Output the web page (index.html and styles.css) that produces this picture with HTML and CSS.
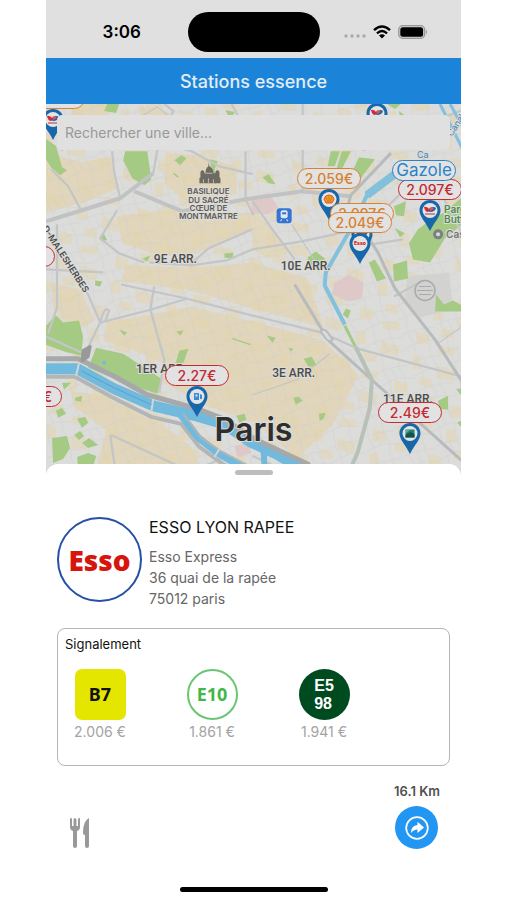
FILE: index.html
```
<!DOCTYPE html>
<html lang="fr">

<head>
  <meta charset="UTF-8">
  <meta name="viewport" content="width=device-width, initial-scale=1.0">
  <title>Stations essence</title>
  <link rel="stylesheet" href="styles.css">
</head>

<body>
  <!-- Shared symbols -->
  <svg class="symbols" aria-hidden="true">
    <symbol id="pin" viewBox="0 0 22 31">
      <path d="M11 0C4.900 0 .5 4.500.5 10.500C.5 17 6.500 21.500 11 31C15.500 21.500 21.500 17 21.500 10.500C21.500 4.500 17.100 0 11 0Z" fill="#1767ab"/>
      <circle cx="11" cy="10.500" r="7.500" fill="#e4e4e4"/>
    </symbol>
    <symbol id="total" viewBox="0 0 22 31">
      <use href="#pin"/>
      <path d="M5 7q3-1 6 3l-2 2q-3 0-4-5z" fill="#d32a36"/>
      <path d="M9 11q4-6 8-3q-1 4-6 4z" fill="#2d5fa8"/>
      <path d="M10 8q3-2 5 1l-4 2z" fill="#d65a48"/>
      <path d="M6 14h10" stroke="#c96d70" stroke-width="1.500"/>
    </symbol>
  </svg>

  <div class="phone">
    <div class="status-bar">
      <span class="time">3:06</span>
      <span class="island"></span>
      <span class="status-icons">
        <svg width="22" height="18" viewBox="0 0 22 18" fill="#a9a9a9">
          <circle cx="2" cy="13" r="1.700"/><circle cx="8" cy="13" r="1.700"/><circle cx="14" cy="13" r="1.700"/><circle cx="20" cy="13" r="1.700"/>
        </svg>
        <svg width="18" height="14" viewBox="0 0 18 14" fill="none" stroke="#000" stroke-width="2.400">
          <path d="M1 5.200Q9-2.200 17 5.200M4 8.300Q9 3.700 14 8.300"/>
          <path d="M9 13.500L6 10.500Q9 8 12 10.500Z" fill="#000" stroke="none"/>
        </svg>
        <svg width="30" height="14" viewBox="0 0 30 14">
          <rect x=".7" y=".7" width="26" height="12.600" rx="4" fill="#d0d0d0" stroke="#999" stroke-width="1.300"/>
          <rect x="2.300" y="2.200" width="22.800" height="9.600" rx="2.500"/>
          <path d="M28 4.500q2 2.500 0 5z" fill="#999"/>
        </svg>
      </span>
    </div>

    <header class="navbar">
      <h1>Stations essence</h1>
    </header>

    <main class="map">
      <svg class="map-tiles" viewBox="0 0 415 371" preserveAspectRatio="xMinYMin slice">
        <defs>
          <pattern id="streets" width="34" height="29" patternUnits="userSpaceOnUse" patternTransform="rotate(-17)">
            <path d="M0 5L13 4L34 7M0 19L18 16L34 21M8 0L6 5L9 18L7 29M24 0L22 6L25 18L22 29M14 4L16 17" fill="none" stroke="#cbccca" stroke-width=".8"/>
          </pattern>
          <pattern id="blocks" width="61" height="53" patternUnits="userSpaceOnUse" patternTransform="rotate(24)">
            <path d="M3 4l13-2 3 9-12 5zM28 8l17-5 2 7-15 6zM9 28l8-4 6 12-9 4zM35 27l19-3 2 10-16 4zM24 44l12-3 4 7-13 4z" fill="#e3d5ae"/>
          </pattern>
        </defs>
        <rect width="415" height="371" fill="#dcdcda"/>

        <!-- built-up areas -->
        <g fill="#e2d6b6" opacity=".85">
          <path d="M0 48L35 58L65 52L72 84L38 98L0 108Z"/>
          <path d="M24 0H72L60 12H26ZM91 2L124 8L118 18H96Z"/>
          <path d="M70 112L125 105L160 117L206 107L204 126L150 149L113 151L76 139Z"/>
          <path d="M80 160L145 163L206 158L260 173L277 223L206 204L140 185L75 177Z"/>
          <path d="M60 218L104 210L145 202L206 217L275 235L312 270L286 320L250 354L211 319L160 301L119 279L116 258L84 244L58 236Z"/>
          <path d="M4 178L34 185L48 216L38 223L8 206Z"/>
          <path d="M25 286L57 291L120 323L145 342L158 371H48L60 325L28 302Z"/>
          <path d="M119 48L154 52L190 62V90L142 98L118 80Z"/>
          <path d="M206 104L230 130L245 148L222 154L206 145Z"/>
        </g>
        <rect width="415" height="371" fill="url(#blocks)" opacity=".55"/>
        <rect width="415" height="371" fill="url(#streets)" opacity=".5"/>

        <!-- pink and grey zones -->
        <path d="M204 94L222 89L232 103L222 110L206 109ZM302 170L317 178L315 194L302 197L285 190L287 179ZM188 341l14-3 3 10-14 4z" fill="#dfc9c8"/>
        <path d="M360 172L402 168L406 205L372 213L358 195Z" fill="#d2d2d1"/>

        <!-- parks -->
        <g fill="#a5ca84">
          <path d="M79 47H101L105 75L98 81L86 74L77 56Z"/>
          <path d="M0 35L10 42L16 63L21 66L14 71L5 63L0 55Z"/>
          <path d="M61 0L73 0L70 9L58 7ZM128 56l7-5 5 3-6 7zM163 55l8 2-3 9 5 8-4 6zM54 133l4-3 3 6-6 1zM96 154l8-3-3 6zM178 149l9-1-1 6-8-1zM49 176l7 1-2 5-5-1zM179 6l9 2-4 9z"/>
          <path d="M0 221L10 211L17 218L33 216L37 232L35 251L19 247L0 240Z"/>
          <path d="M50 243L77 249L115 274L111 289L83 280L42 263Z"/>
          <path d="M133 246l9-2-5 14-8 1zM73 225l8 3-3 3zM130 227l7-1-3 5zM16 278h9l-7 7zM10 306l6-3 4 6-8 4zM29 293l7-2-1 6-6-1zM31 314l8-2 3 6-6 5zM28 330l6-4 4 5-5 4zM36 338l7-5 9 7-10 3zM31 352l11-4 8 3-3 11H32ZM6 333l15-2 3 12-7 11-10 4z"/>
          <path d="M340 0h14l-6 5zM352 7l8 6-6 6zM284 47h9l-5 15-7 0zM295 47h9l-9 18-5-1zM312 53l16 2-14 19-10-3zM356 22l9 2-5 8zM347 102l12-5-2 15-8-1zM216 73l6-3 7 10-7-1zM348 124l10 5-5 4zM261 153l8-6 9 7-5 13-12-5zM322 158l6-3 11 19-9 3zM346 160l14-4 1 18-14 3z"/>
          <path d="M378 120L397 108L415 93V120L398 134L383 158L366 155L362 139L371 125Z"/>
          <path d="M389 190L397 200L406 196L415 201V207L388 207ZM299 204l5 2-3 8-5-4zM257 254l8-2 5 9-8 1zM220 231l9 2-3 5zM242 243l5 1-3 3zM247 293l5-1 4 4-7 4zM272 309l7-1-2 6-4 2zM391 296l10-5v14l-9-1zM409 284h6v8zM410 318l5-3v8zM190 311l8-2 2 6-7 3zM352 325l6 3-5 3z"/>
        </g>
        <g fill="none" stroke="#a5ca84" stroke-width="3">
          <path d="M298 221L309 243L318 260"/>
          <path d="M127 69l5 4M186 234l18 6" stroke-width="1.500"/>
        </g>

        <!-- secondary roads -->
        <g fill="none" stroke="#c3c5c6" stroke-width="2.200">
          <path d="M66 47L68 68L74 94M5 65L22 82L35 106M71 106L54 134L73 149L98 158M103 158L145 161L180 156L206 145L255 137L315 124M144 160L162 144L206 125M118 0L127 7L111 46L107 69M119 40L145 47L172 62L206 70M185 0L195 18M199 47V95L207 111M11 120V203L2 229M0 165L57 168"/>
          <path d="M75 180L140 194L206 211L275 228L311 244L415 272M108 182L104 205L118 255L113 288M54 218L105 205L141 194M54 218Q58 201 63 206L59 217M38 251L54 218L42 190L24 167M0 232L36 248M64 330L70 371M65 330L145 367L176 353M256 0V88M206 97L228 128L248 155M316 46L345 35L415 6M312 142L356 135M347 192L376 176M372 46L415 130M332 111L361 82M206 351L250 371"/>
          <path d="M85 18L111 3L129 17L162 25M15 47L40 30M245 120L272 162M206 290L250 275L283 249M389 240L415 222" stroke-width="1.200"/>
        </g>

        <!-- main roads -->
        <g fill="none" stroke="#b8bbbd" stroke-width="4" stroke-linejoin="round">
          <path d="M0 117L36 106L74 94L107 69M88 87L136 107L199 95L256 87L303 92" stroke="#c0c2c3"/>
          <path d="M344 49L304 91L301 102L331 148L348 184L388 235L415 277V285M248 180L274 223L283 237L326 276L415 356" stroke-width="3"/>
          <path d="M274 227q3-4 7 1l5 7q-3 3-7-1z" fill="#dcdcda" stroke-width="2"/>
        </g>
        <path d="M309 243L325 275L323 303L311 347L304 363" fill="none" stroke="#b7c1b8" stroke-width="4"/>

        <!-- Seine and canals -->
        <g fill="none" stroke-linejoin="round">
          <path d="M0 272H29L65 292L105 312L135 319L153 342L172 356L195 371" stroke="#b4b6b6" stroke-width="4"/>
          <path d="M0 264H31L68 284L107 301L150 311L178 319L204 337L230 349L268 371" stroke="#72b9de" stroke-width="11"/>
          <path d="M133 308L151 332L171 348L202 366" stroke="#72b9de" stroke-width="7"/>
          <path d="M217 345L218 363" stroke="#72b9de" stroke-width="6"/>
          <path d="M137 309L155 333L174 346L202 361" stroke="#b1b4b5" stroke-width="2"/>
          <path d="M0 254H32L67 271L101 290L151 304L177 314L208 334L263 360" stroke="#a6a8a9" stroke-width="5"/>
          <path d="M37 246L44 242L42 252L36 256Z" fill="#999" stroke="#999" stroke-width="3"/>
          <path d="M352 67L321 89L306 121L279 168L278 181L298 220" stroke="#82c0dc" stroke-width="4"/>
          <path d="M349 69L320 91" stroke="#82c0dc" stroke-width="8"/>
          <path d="M393 0L415 44M403 0L415 22" stroke="#82c0dc" stroke-width="3"/>
          <path d="M33 258L30 271M107 294L105 307M173 344L168 352" stroke="#d3d5d4" stroke-width="2"/>
          <path d="M35 266L68 283L105 300" stroke="#5ba5d0" stroke-width="1"/>
        </g>
        <circle cx="58" cy="258" r="2" fill="#79b9d8"/>

        <!-- Sacré-Cœur -->
        <g fill="#6d6a63">
          <path d="M162 58l1 4q4 2 4 7h2q0-3 2-3t2 3v4l1 1v5h-21v-5l1-1v-4q0-3 2-3t2 3h1q0-5 3-7z"/>
          <path d="M157 75v4M162 74v5M167 75v4M159 69h7" stroke="#b9b6ae" stroke-width="1"/>
        </g>
        <!-- train station -->
        <rect x="230" y="104" width="15" height="15" rx="3" fill="#3474d4"/>
        <rect x="234" y="106" width="7" height="8" rx="2" fill="#e2e6ee"/>
        <path d="M235.500 108h4v2h-4z" fill="#3474d4"/>
        <path d="M235 115l-1 2M240 115l1 2" stroke="#e2e6ee"/>
        <!-- other points of interest -->
        <circle cx="391" cy="130" r="5" fill="#7c8083"/><circle cx="391" cy="130" r="2" fill="#d9d9d9"/>
        <g fill="none" stroke="#aaa"><circle cx="378" cy="186" r="10" stroke-width="1.500"/><path d="M372 182h12M370 186h16M372 190h12"/></g>

        <g class="map-labels">
          <g class="landmark">
            <text x="162" y="90">BASILIQUE</text>
            <text x="162" y="99">DU SACRÉ</text>
            <text x="162" y="107">CŒUR DE</text>
            <text x="162" y="115">MONTMARTRE</text>
          </g>
          <g class="district">
            <text x="129" y="159">9E ARR.</text>
            <text x="259" y="166">10E ARR.</text>
            <text x="115" y="268">1ER ARR.</text>
            <text x="247" y="272">3E ARR.</text>
            <text x="361" y="298">11E ARR.</text>
          </g>
          <text class="street" transform="translate(-4 124) rotate(57)">D-MALESHERBES</text>
          <g class="place">
            <text x="397" y="109">Parc</text>
            <text x="397" y="119">Buttes</text>
            <text class="poi" x="399" y="134">Casino</text>
          </g>
          <text class="canal" transform="translate(405 33) rotate(-58)">Canal</text>
          <text class="canal" x="370" y="54">Ca</text>
          <text class="city" x="207" y="336">Paris</text>
        </g>
      </svg>

      <button type="button" class="marker orange m1"><span>1.999€</span><svg><use href="#total"/></svg></button>
      <button type="button" class="marker red m2"><span></span><svg><use href="#total"/></svg></button>
      <button type="button" class="marker red m3"><span></span></button>
      <button type="button" class="marker red m4"><span>2.199€</span></button>
      <button type="button" class="marker orange m5"><span>2.059€</span>
        <svg viewBox="0 0 22 31"><use href="#pin"/><path d="M8 14L6 10Q7 6 11 6T16 10L14 14Z" fill="#e8a51c" stroke="#d9532a"/><path d="M11 13V7M10 13L8 8M12 13l2-5" stroke="#d9532a" stroke-width=".6"/></svg>
      </button>
      <button type="button" class="marker orange m6"><span>2.097€</span><svg><use href="#total"/></svg></button>
      <button type="button" class="marker orange m7"><span>2.049€</span>
        <svg viewBox="0 0 22 31"><use href="#pin"/><text x="11" y="12" class="pin-text">Esso</text></svg>
      </button>
      <button type="button" class="marker red m8"><span>2.097€</span><svg><use href="#total"/></svg></button>
      <button type="button" class="marker red m9"><span>2.27€</span>
        <svg viewBox="0 0 22 31"><use href="#pin"/><path d="M8 7h5v7H8zM14 8l2 1v4h-2" fill="#3b8cd2"/><path d="M9.500 8.500h2v2h-2z" fill="#e4e4e4"/></svg>
      </button>
      <button type="button" class="marker red m10"><span>2.49€</span>
        <svg viewBox="0 0 22 31"><use href="#pin"/><path d="M6.500 6.500h9v8h-9z" fill="#1f8365"/><path d="M6.500 12l5-3 4 2v3.500h-9z" fill="#14524f"/><path d="M7 7h4l-4 3z" fill="#5ab2a0"/></svg>
      </button>
      <button type="button" class="fuel-filter">Gazole</button>

      <input type="search" class="search" placeholder="Rechercher une ville..." aria-label="Rechercher une ville">
    </main>

    <section class="sheet">
      <div class="handle"></div>

      <div class="station">
        <div class="brand">Esso</div>
        <div class="station-info">
          <h2>ESSO LYON RAPEE</h2>
          <p>Esso Express</p>
          <p>36 quai de la rapée</p>
          <p>75012 paris</p>
        </div>
      </div>

      <div class="prices">
        <h3>Signalement</h3>
        <ul>
          <li><span class="fuel b7">B7</span>2.006 €</li>
          <li><span class="fuel e10">E10</span>1.861 €</li>
          <li><span class="fuel e5">E5<br>98</span>1.941 €</li>
        </ul>
      </div>

      <div class="actions">
        <svg class="food" width="22" height="32" viewBox="0 0 22 32" role="img" aria-label="Restauration">
          <path d="M1 2.500Q1-.5 3 2V9h1.500V2.500Q6-.5 7.500 2.500V9H9V2Q11-.5 11 2.500V10Q11 13 8 14V29Q8 31 6 31T4 29V14Q1 13 1 10Z" fill="#999"/>
          <path d="M20 1Q14 4 14 16Q14 18 16 18V29Q16 31 18 31T20 29Z" fill="#999"/>
        </svg>
        <div class="go">
          <span>16.1 Km</span>
          <button type="button" class="go-button" aria-label="Itinéraire">
            <svg width="24" height="24" viewBox="0 0 24 24">
              <circle cx="12" cy="12" r="10.800" fill="none" stroke="#fff" stroke-width="1.700"/>
              <path d="M6 17Q6 9.500 12.500 9V5.800L19 11.500L12.500 17V13.500Q8.500 13.500 6 17Z" fill="#fff"/>
            </svg>
          </button>
        </div>
      </div>

      <div class="home-indicator"></div>
    </section>
  </div>
</body>

</html>
```
FILE: styles.css
```
* {
  box-sizing: border-box;
}

body {
  margin: 0;
  padding: 0 46px;
  background-color: #fff;
  font-family: Inter, "Liberation Sans", sans-serif;
  color: #111;
}

h1,
h2,
h3,
p,
ul {
  margin: 0;
  padding: 0;
}

button {
  font-family: inherit;
  cursor: pointer;
}

.symbols {
  display: none;
}

.phone {
  max-width: 430px;
  min-height: 100vh;
  margin: 0 auto;
  display: flex;
  flex-direction: column;
}

/* Status bar */
.status-bar {
  display: grid;
  grid-template-columns: 1fr 132px 1fr;
  align-items: center;
  height: 58px;
  padding-top: 6px;
  background-color: #e0e0e0;
}

.time {
  padding-left: 10px;
  text-align: center;
  font-size: 17px;
  font-weight: 600;
  color: #000;
}

.island {
  height: 40px;
  border-radius: 20px;
  background-color: #000;
}

.status-icons {
  display: flex;
  align-items: center;
  justify-content: center;
  gap: 7px;
  padding-right: 8px;
}

/* Header */
.navbar {
  display: flex;
  align-items: center;
  justify-content: center;
  height: 46px;
  background-color: #1c84d8;
}

.navbar h1 {
  font-size: 18px;
  font-weight: 500;
  color: #e2edf6;
}

/* Map */
.map {
  position: relative;
  height: 372px;
  padding: 11px;
  overflow: hidden;
  background-color: #dcdcda;
}

.map-tiles {
  position: absolute;
  top: 0;
  left: 0;
  width: 100%;
  height: 100%;
}

.map-labels {
  fill: #4c4c4c;
  stroke: #dcdcda;
  stroke-width: 2px;
  paint-order: stroke;
}

.landmark {
  font-size: 8px;
  font-weight: 600;
  text-anchor: middle;
  fill: #5d5a52;
}

.district {
  font-family: Roboto, sans-serif;
  font-size: 12px;
  font-weight: 500;
  text-anchor: middle;
}

.street {
  font-size: 9px;
  font-weight: 600;
}

.place {
  font-size: 10px;
  font-weight: 600;
  fill: #4e8a4b;
}

.poi {
  fill: #777;
}

.canal {
  font-size: 9px;
  fill: #4585ae;
}

.city {
  font-size: 32px;
  font-weight: 600;
  text-anchor: middle;
  fill: #2e2e2e;
}

.search {
  position: relative;
  display: block;
  width: 100%;
  height: 35px;
  padding: 0 8px;
  border: none;
  border-radius: 5px;
  background-color: #e0e0e0;
  font-family: inherit;
  font-size: 14px;
}

.search::placeholder {
  color: #999;
}

.marker {
  position: absolute;
  display: flex;
  flex-direction: column;
  align-items: center;
  width: 64px;
  padding: 0;
  border: none;
  background: none;
}

.marker span,
.fuel-filter {
  width: 100%;
  height: 21px;
  border: 1px solid;
  border-radius: 11px;
  background-color: #e2e2e2;
  font-size: 14px;
  font-weight: 500;
  line-height: 19px;
}

.marker svg {
  width: 22px;
  height: 31px;
}

.orange {
  color: #d8812f;
}

.red {
  color: #c42a33;
}

.fuel-filter {
  position: absolute;
  top: 56px;
  left: 346px;
  width: 64px;
  padding: 0;
  color: #2b82c9;
  font-size: 17px;
  font-weight: 400;
}

.pin-text {
  font-size: 5px;
  font-weight: 800;
  text-anchor: middle;
  fill: #cf1f25;
}

/* Marker positions on the map */
.m1 { left: -25px; top: -16px; }
.m2 { left: 299px; top: -22px; }
.m3 { left: -55px; top: 142px; }
.m4 { left: -48px; top: 282px; }
.m5 { left: 251px; top: 64px; }
.m6 { left: 284px; top: 99px; }
.m7 { left: 282px; top: 108px; }
.m8 { left: 352px; top: 75px; }
.m9 { left: 119px; top: 261px; }
.m10 { left: 332px; top: 298px; }

/* Bottom sheet */
.sheet {
  position: relative;
  flex: 1;
  display: flex;
  flex-direction: column;
  margin-top: -12px;
  padding: 6px 11px 8px;
  border-radius: 12px 12px 0 0;
  background-color: #fff;
}

.handle {
  width: 38px;
  height: 5px;
  margin: 0 auto 42px;
  border-radius: 3px;
  background-color: #bdbdbd;
}

.station {
  display: flex;
  gap: 7px;
  margin-bottom: 19px;
}

.brand {
  display: flex;
  align-items: center;
  justify-content: center;
  width: 85px;
  height: 85px;
  border: 2px solid #2450a8;
  border-radius: 50%;
  font-family: "Open Sans", sans-serif;
  font-size: 28px;
  font-weight: 800;
  color: #d8150c;
}

.station-info h2 {
  margin-bottom: 8px;
  font-size: 16px;
  font-weight: 400;
  line-height: 21px;
}

.station-info p {
  font-size: 14px;
  line-height: 21px;
  color: #666;
}

.prices {
  min-height: 138px;
  padding: 7px;
  border: 1px solid #b5b5b5;
  border-radius: 8px;
}

.prices h3 {
  margin-bottom: 16px;
  font-size: 13px;
  font-weight: 400;
  line-height: 17px;
}

.prices ul {
  display: flex;
  gap: 42px;
  list-style: none;
}

.prices li {
  display: flex;
  flex-direction: column;
  align-items: center;
  width: 70px;
  font-size: 14px;
  line-height: 23px;
  color: #a3a3a3;
}

.fuel {
  display: flex;
  align-items: center;
  justify-content: center;
  width: 51px;
  height: 51px;
  border-radius: 50%;
  font-family: "Noto Sans", sans-serif;
  font-size: 18px;
  font-weight: 700;
}

.b7 {
  border-radius: 7px;
  background-color: #e5e600;
  color: #111;
}

.e10 {
  border: 2px solid #6cc573;
  color: #43b649;
}

.e5 {
  background-color: #004a20;
  font-family: "Liberation Sans", sans-serif;
  font-size: 16px;
  line-height: 18px;
  color: #fff;
}

.actions {
  display: flex;
  align-items: flex-end;
  justify-content: space-between;
  margin: 17px 10px 0 12px;
}

.go {
  display: flex;
  flex-direction: column;
  align-items: center;
  gap: 6px;
  font-size: 13px;
  font-weight: 600;
  line-height: 17px;
  color: #505050;
}

.go-button {
  display: flex;
  align-items: center;
  justify-content: center;
  width: 43px;
  height: 43px;
  padding: 0;
  border: none;
  border-radius: 50%;
  background-color: #2196f3;
}

.home-indicator {
  width: 148px;
  height: 5px;
  margin: auto auto 0;
  border-radius: 3px;
  background-color: #000;
}
```
